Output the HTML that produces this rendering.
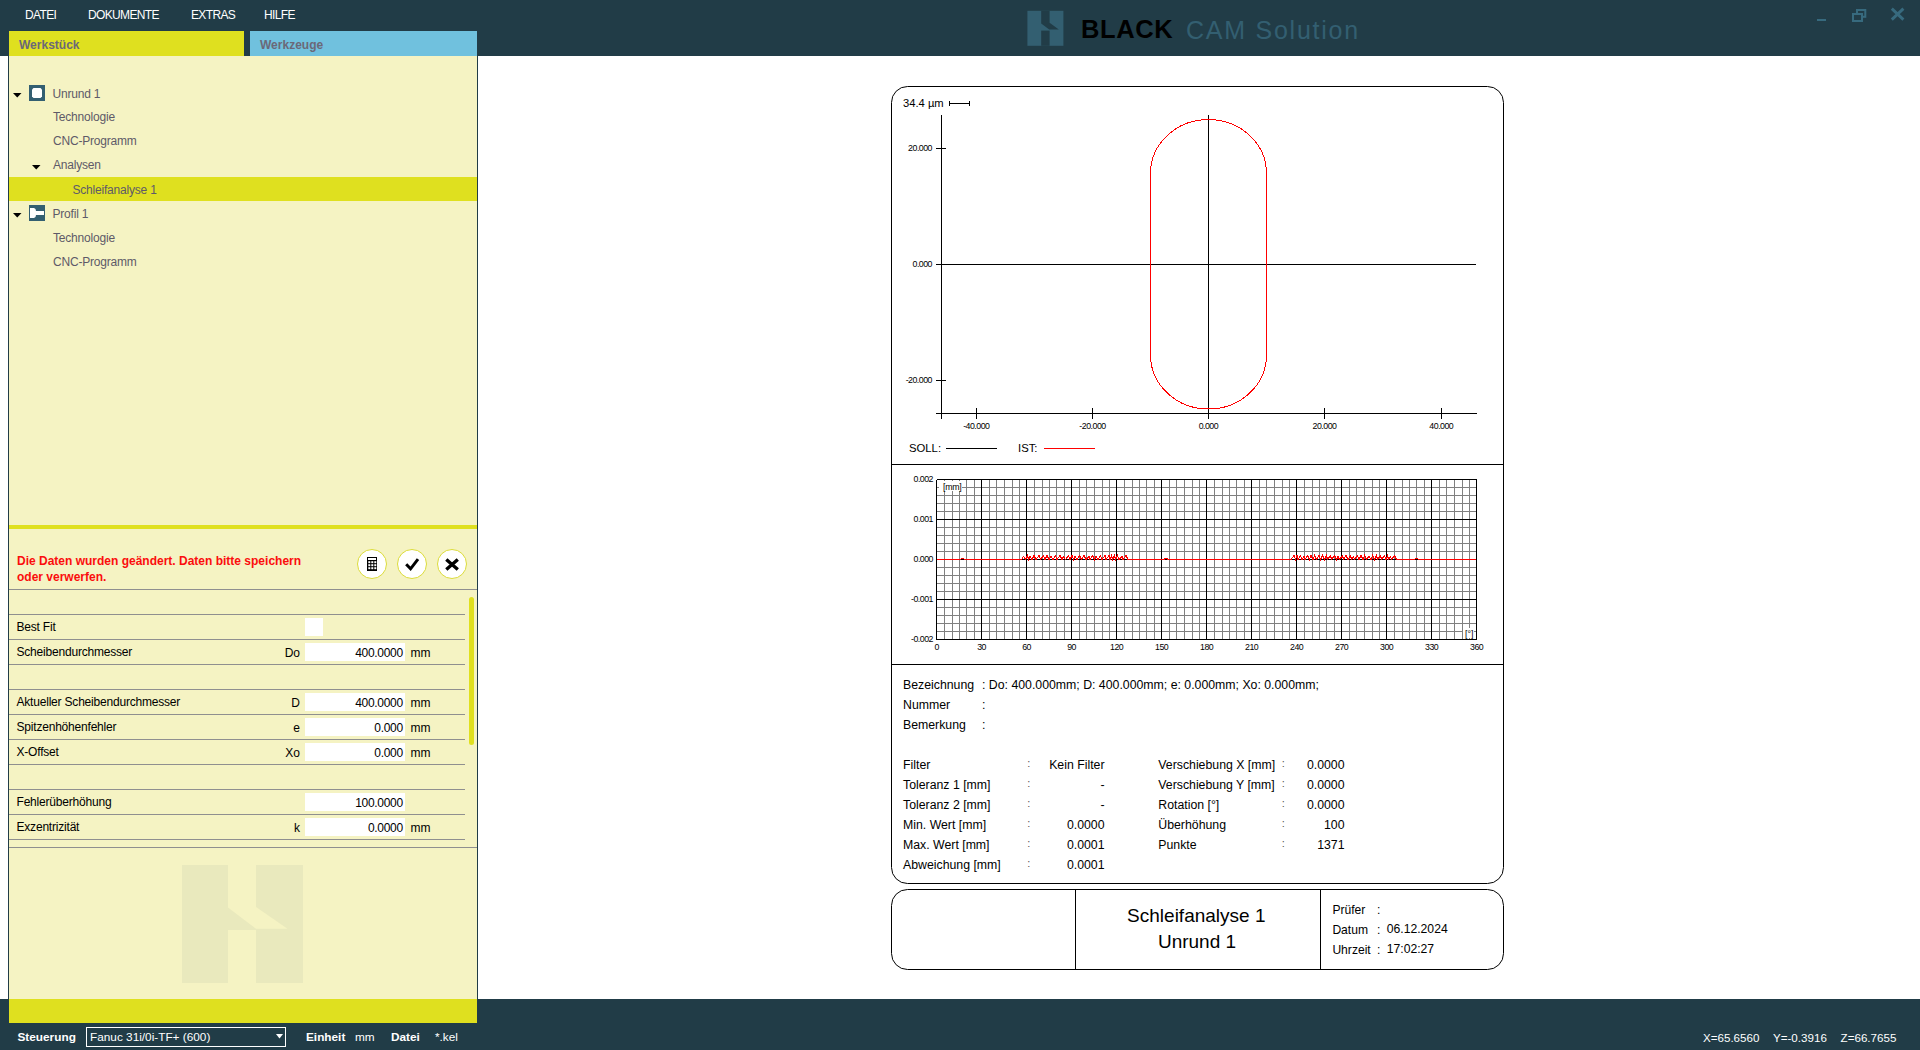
<!DOCTYPE html>
<html><head><meta charset="utf-8"><style>
html,body{margin:0;padding:0;width:1920px;height:1050px;overflow:hidden;background:#fff;font-family:"Liberation Sans", sans-serif;}
</style></head><body>
<div style="position:absolute;left:0px;top:0px;width:1920px;height:56px;background:#213c47;"></div>
<div style="position:absolute;left:25px;top:9.44px;font-size:12px;line-height:12px;color:#fff;font-weight:normal;white-space:nowrap;letter-spacing:-0.65px;">DATEI</div>
<div style="position:absolute;left:88px;top:9.44px;font-size:12px;line-height:12px;color:#fff;font-weight:normal;white-space:nowrap;letter-spacing:-0.65px;">DOKUMENTE</div>
<div style="position:absolute;left:191px;top:9.44px;font-size:12px;line-height:12px;color:#fff;font-weight:normal;white-space:nowrap;letter-spacing:-0.65px;">EXTRAS</div>
<div style="position:absolute;left:264px;top:9.44px;font-size:12px;line-height:12px;color:#fff;font-weight:normal;white-space:nowrap;letter-spacing:-0.65px;">HILFE</div>
<svg style="position:absolute;left:1024px;top:8px" width="44" height="42" viewBox="0 0 44 42">
<rect x="3.4" y="2.8" width="36" height="35" fill="#335f71"/>
<polygon points="17.2,2.8 25.6,2.8 25.6,14.8 34.8,21.6 25.2,21.6 17.2,15.6" fill="#213c47"/>
<rect x="17.2" y="22.6" width="8.4" height="15.2" fill="#213c47"/>
</svg>
<div style="position:absolute;left:1081px;top:17.31px;font-size:25.5px;line-height:25.5px;color:#000;font-weight:bold;white-space:nowrap;letter-spacing:0.6px;">BLACK</div>
<div style="position:absolute;left:1186px;top:17.74px;font-size:25px;line-height:25px;color:#335f71;font-weight:normal;white-space:nowrap;letter-spacing:1.75px;">CAM Solution</div>
<svg style="position:absolute;left:1800px;top:0px" width="120" height="40" viewBox="0 0 120 40">
<rect x="17" y="19" width="9" height="2" fill="#376a7e"/>
<rect x="57" y="10" width="8.3" height="6.8" fill="none" stroke="#376a7e" stroke-width="2"/>
<rect x="53" y="14" width="9" height="7" fill="#213c47" stroke="#376a7e" stroke-width="2"/>
<path d="M91.8,8.6 L103.4,19.6 M103.4,8.6 L91.8,19.6" stroke="#376a7e" stroke-width="2.9"/>
</svg>
<div style="position:absolute;left:8px;top:56px;width:470px;height:943px;background:#f5f3c3;"></div>
<div style="position:absolute;left:8px;top:56px;width:1px;height:943px;background:#213c47;"></div>
<div style="position:absolute;left:477px;top:56px;width:1px;height:943px;background:#213c47;"></div>
<div style="position:absolute;left:8px;top:31px;width:1px;height:25px;background:#213c47;"></div>
<div style="position:absolute;left:9px;top:31px;width:235px;height:25px;background:#dfe01f;"></div>
<div style="position:absolute;left:250px;top:31px;width:227px;height:25px;background:#70c1de;"></div>
<div style="position:absolute;left:19px;top:38.84px;font-size:12px;line-height:12px;color:#6b6878;font-weight:bold;white-space:nowrap;">Werkstück</div>
<div style="position:absolute;left:260px;top:38.84px;font-size:12px;line-height:12px;color:#6b6878;font-weight:bold;white-space:nowrap;">Werkzeuge</div>
<div style="position:absolute;left:9px;top:177px;width:468px;height:24px;background:#dfe01f;"></div>
<svg style="position:absolute;left:13px;top:93px" width="9" height="5" viewBox="0 0 9 5"><polygon points="0,0 8.5,0 4.25,4.6" fill="#000"/></svg>
<svg style="position:absolute;left:32px;top:164.5px" width="9" height="5" viewBox="0 0 9 5"><polygon points="0,0 8.5,0 4.25,4.6" fill="#000"/></svg>
<svg style="position:absolute;left:13px;top:212.5px" width="9" height="5" viewBox="0 0 9 5"><polygon points="0,0 8.5,0 4.25,4.6" fill="#000"/></svg>
<svg style="position:absolute;left:29px;top:85px" width="16" height="16" viewBox="0 0 16 16">
<rect x="0" y="0" width="16" height="16" fill="#335f71"/>
<polygon points="4.5,3 11.5,3 13,4.5 13,11.5 11.5,13 4.5,13 3,11.5 3,4.5" fill="#fff"/></svg>
<svg style="position:absolute;left:29px;top:205px" width="16" height="16" viewBox="0 0 16 16">
<rect x="0" y="0" width="16" height="16" fill="#335f71"/>
<path d="M1,3 L5,3 Q7,3.5 7,6 L15,6 L15,10 L7,10 Q7,12.5 5,13 L1,13 Z" fill="#fff"/></svg>
<div style="position:absolute;left:52.5px;top:87.84px;font-size:12px;line-height:12px;color:#5e5a68;font-weight:normal;white-space:nowrap;letter-spacing:-0.2px;">Unrund 1</div>
<div style="position:absolute;left:53px;top:111.34px;font-size:12px;line-height:12px;color:#5e5a68;font-weight:normal;white-space:nowrap;letter-spacing:-0.2px;">Technologie</div>
<div style="position:absolute;left:53px;top:135.34px;font-size:12px;line-height:12px;color:#5e5a68;font-weight:normal;white-space:nowrap;letter-spacing:-0.2px;">CNC-Programm</div>
<div style="position:absolute;left:53px;top:159.34px;font-size:12px;line-height:12px;color:#5e5a68;font-weight:normal;white-space:nowrap;letter-spacing:-0.2px;">Analysen</div>
<div style="position:absolute;left:72.5px;top:183.84px;font-size:12px;line-height:12px;color:#5e5a68;font-weight:normal;white-space:nowrap;letter-spacing:-0.2px;">Schleifanalyse 1</div>
<div style="position:absolute;left:52.5px;top:207.84px;font-size:12px;line-height:12px;color:#5e5a68;font-weight:normal;white-space:nowrap;letter-spacing:-0.2px;">Profil 1</div>
<div style="position:absolute;left:53px;top:231.84px;font-size:12px;line-height:12px;color:#5e5a68;font-weight:normal;white-space:nowrap;letter-spacing:-0.2px;">Technologie</div>
<div style="position:absolute;left:53px;top:255.84px;font-size:12px;line-height:12px;color:#5e5a68;font-weight:normal;white-space:nowrap;letter-spacing:-0.2px;">CNC-Programm</div>
<div style="position:absolute;left:9px;top:525px;width:468px;height:4px;background:#dfe01f;"></div>
<div style="position:absolute;left:17px;top:554.84px;font-size:12px;line-height:12px;color:#fb0d0d;font-weight:bold;white-space:nowrap;">Die Daten wurden geändert. Daten bitte speichern</div>
<div style="position:absolute;left:17px;top:570.84px;font-size:12px;line-height:12px;color:#fb0d0d;font-weight:bold;white-space:nowrap;">oder verwerfen.</div>
<div style="position:absolute;left:357px;top:549px;width:28px;height:28px;border:1px solid #dcdc3a;border-radius:50%;background:#fff"></div>
<div style="position:absolute;left:397px;top:549px;width:28px;height:28px;border:1px solid #dcdc3a;border-radius:50%;background:#fff"></div>
<div style="position:absolute;left:436.7px;top:549px;width:28px;height:28px;border:1px solid #dcdc3a;border-radius:50%;background:#fff"></div>
<svg style="position:absolute;left:360px;top:550px" width="110" height="28" viewBox="360 550 110 28">
<rect x="367.5" y="557.5" width="9" height="13" fill="none" stroke="#000" stroke-width="1"/>
<rect x="367" y="560" width="10" height="11" fill="#000"/>
<g fill="#fff">
<rect x="368.3" y="561.2" width="2" height="2"/><rect x="371.3" y="561.2" width="2" height="2"/><rect x="374.3" y="561.2" width="2" height="2"/>
<rect x="368.3" y="564.2" width="2" height="2"/><rect x="371.3" y="564.2" width="2" height="2"/><rect x="374.3" y="564.2" width="2" height="2"/>
<rect x="368.3" y="567.2" width="2" height="2"/><rect x="371.3" y="567.2" width="2" height="2"/><rect x="374.3" y="567.2" width="2" height="2"/>
</g>
<path d="M406.2,564.3 L410.6,568.8 L418,559.2" fill="none" stroke="#000" stroke-width="3"/>
<path d="M446.3,559.4 L457.8,569.6 M457.8,559.4 L446.3,569.6" fill="none" stroke="#000" stroke-width="3.3"/>
</svg>
<div style="position:absolute;left:9px;top:589px;width:468px;height:1px;background:#8f8f8f;"></div>
<div style="position:absolute;left:9px;top:614px;width:456px;height:1px;background:#8f8f8f;"></div>
<div style="position:absolute;left:9px;top:639px;width:456px;height:1px;background:#8f8f8f;"></div>
<div style="position:absolute;left:9px;top:664px;width:456px;height:1px;background:#8f8f8f;"></div>
<div style="position:absolute;left:9px;top:689px;width:456px;height:1px;background:#8f8f8f;"></div>
<div style="position:absolute;left:9px;top:714px;width:456px;height:1px;background:#8f8f8f;"></div>
<div style="position:absolute;left:9px;top:739px;width:456px;height:1px;background:#8f8f8f;"></div>
<div style="position:absolute;left:9px;top:764px;width:456px;height:1px;background:#8f8f8f;"></div>
<div style="position:absolute;left:9px;top:789px;width:456px;height:1px;background:#8f8f8f;"></div>
<div style="position:absolute;left:9px;top:814px;width:456px;height:1px;background:#8f8f8f;"></div>
<div style="position:absolute;left:9px;top:839px;width:456px;height:1px;background:#8f8f8f;"></div>
<div style="position:absolute;left:9px;top:847px;width:468px;height:1px;background:#8f8f8f;"></div>
<div style="position:absolute;left:469px;top:597px;width:5px;height:148px;background:#dfe01f;border-radius:3px;"></div>
<div style="position:absolute;left:16.5px;top:620.84px;font-size:12px;line-height:12px;color:#000;font-weight:normal;white-space:nowrap;letter-spacing:-0.2px;">Best Fit</div>
<div style="position:absolute;left:305px;top:618px;width:18px;height:18px;background:#fff;"></div>
<div style="position:absolute;left:16.5px;top:645.84px;font-size:12px;line-height:12px;color:#000;font-weight:normal;white-space:nowrap;letter-spacing:-0.2px;">Scheibendurchmesser</div>
<div style="position:absolute;left:305px;top:643px;width:100px;height:18px;background:#fff;"></div>
<div style="position:absolute;left:300px;top:646.64px;font-size:12px;line-height:12px;color:#000;font-weight:normal;white-space:nowrap;transform:translateX(-100%);">Do</div>
<div style="position:absolute;left:402.8px;top:646.64px;font-size:12px;line-height:12px;color:#000;font-weight:normal;white-space:nowrap;transform:translateX(-100%);letter-spacing:-0.3px;">400.0000</div>
<div style="position:absolute;left:410.5px;top:646.64px;font-size:12px;line-height:12px;color:#000;font-weight:normal;white-space:nowrap;">mm</div>
<div style="position:absolute;left:16.5px;top:695.84px;font-size:12px;line-height:12px;color:#000;font-weight:normal;white-space:nowrap;letter-spacing:-0.2px;">Aktueller Scheibendurchmesser</div>
<div style="position:absolute;left:305px;top:693px;width:100px;height:18px;background:#fff;"></div>
<div style="position:absolute;left:300px;top:696.64px;font-size:12px;line-height:12px;color:#000;font-weight:normal;white-space:nowrap;transform:translateX(-100%);">D</div>
<div style="position:absolute;left:402.8px;top:696.64px;font-size:12px;line-height:12px;color:#000;font-weight:normal;white-space:nowrap;transform:translateX(-100%);letter-spacing:-0.3px;">400.0000</div>
<div style="position:absolute;left:410.5px;top:696.64px;font-size:12px;line-height:12px;color:#000;font-weight:normal;white-space:nowrap;">mm</div>
<div style="position:absolute;left:16.5px;top:720.84px;font-size:12px;line-height:12px;color:#000;font-weight:normal;white-space:nowrap;letter-spacing:-0.2px;">Spitzenhöhenfehler</div>
<div style="position:absolute;left:305px;top:718px;width:100px;height:18px;background:#fff;"></div>
<div style="position:absolute;left:300px;top:721.64px;font-size:12px;line-height:12px;color:#000;font-weight:normal;white-space:nowrap;transform:translateX(-100%);">e</div>
<div style="position:absolute;left:402.8px;top:721.64px;font-size:12px;line-height:12px;color:#000;font-weight:normal;white-space:nowrap;transform:translateX(-100%);letter-spacing:-0.3px;">0.000</div>
<div style="position:absolute;left:410.5px;top:721.64px;font-size:12px;line-height:12px;color:#000;font-weight:normal;white-space:nowrap;">mm</div>
<div style="position:absolute;left:16.5px;top:745.84px;font-size:12px;line-height:12px;color:#000;font-weight:normal;white-space:nowrap;letter-spacing:-0.2px;">X-Offset</div>
<div style="position:absolute;left:305px;top:743px;width:100px;height:18px;background:#fff;"></div>
<div style="position:absolute;left:300px;top:746.64px;font-size:12px;line-height:12px;color:#000;font-weight:normal;white-space:nowrap;transform:translateX(-100%);">Xo</div>
<div style="position:absolute;left:402.8px;top:746.64px;font-size:12px;line-height:12px;color:#000;font-weight:normal;white-space:nowrap;transform:translateX(-100%);letter-spacing:-0.3px;">0.000</div>
<div style="position:absolute;left:410.5px;top:746.64px;font-size:12px;line-height:12px;color:#000;font-weight:normal;white-space:nowrap;">mm</div>
<div style="position:absolute;left:16.5px;top:795.84px;font-size:12px;line-height:12px;color:#000;font-weight:normal;white-space:nowrap;letter-spacing:-0.2px;">Fehlerüberhöhung</div>
<div style="position:absolute;left:305px;top:793px;width:100px;height:18px;background:#fff;"></div>
<div style="position:absolute;left:402.8px;top:796.64px;font-size:12px;line-height:12px;color:#000;font-weight:normal;white-space:nowrap;transform:translateX(-100%);letter-spacing:-0.3px;">100.0000</div>
<div style="position:absolute;left:16.5px;top:820.84px;font-size:12px;line-height:12px;color:#000;font-weight:normal;white-space:nowrap;letter-spacing:-0.2px;">Exzentrizität</div>
<div style="position:absolute;left:305px;top:818px;width:100px;height:18px;background:#fff;"></div>
<div style="position:absolute;left:300px;top:821.64px;font-size:12px;line-height:12px;color:#000;font-weight:normal;white-space:nowrap;transform:translateX(-100%);">k</div>
<div style="position:absolute;left:402.8px;top:821.64px;font-size:12px;line-height:12px;color:#000;font-weight:normal;white-space:nowrap;transform:translateX(-100%);letter-spacing:-0.3px;">0.0000</div>
<div style="position:absolute;left:410.5px;top:821.64px;font-size:12px;line-height:12px;color:#000;font-weight:normal;white-space:nowrap;">mm</div>
<svg style="position:absolute;left:182px;top:865px" width="122" height="119" viewBox="0 0 122 119">
<rect x="0" y="0" width="121" height="118" fill="#e9e9bd"/>
<polygon points="46,0 74,0 74,42 105.5,63.8 74,63.8 46,42.5" fill="#f5f3c3"/>
<rect x="46" y="65" width="28" height="53" fill="#f5f3c3"/>
</svg>
<div style="position:absolute;left:0px;top:999px;width:1920px;height:51px;background:#213c47;"></div>
<div style="position:absolute;left:9px;top:999px;width:468px;height:24px;background:#dfe01f;"></div>
<div style="position:absolute;left:17.5px;top:1032.01px;font-size:11.8px;line-height:11.8px;color:#fff;font-weight:bold;white-space:nowrap;">Steuerung</div>
<div style="position:absolute;left:86px;top:1027px;width:198px;height:18px;border:1px solid #fff"></div>
<div style="position:absolute;left:90px;top:1032.01px;font-size:11.8px;line-height:11.8px;color:#fff;font-weight:normal;white-space:nowrap;">Fanuc 31i/0i-TF+ (600)</div>
<svg style="position:absolute;left:276px;top:1034px" width="8" height="5" viewBox="0 0 8 5"><polygon points="0,0 7,0 3.5,4.5" fill="#fff"/></svg>
<div style="position:absolute;left:306px;top:1032.01px;font-size:11.8px;line-height:11.8px;color:#fff;font-weight:bold;white-space:nowrap;">Einheit</div>
<div style="position:absolute;left:355px;top:1032.01px;font-size:11.8px;line-height:11.8px;color:#fff;font-weight:normal;white-space:nowrap;">mm</div>
<div style="position:absolute;left:391px;top:1032.01px;font-size:11.8px;line-height:11.8px;color:#fff;font-weight:bold;white-space:nowrap;">Datei</div>
<div style="position:absolute;left:435px;top:1032.01px;font-size:11.8px;line-height:11.8px;color:#fff;font-weight:normal;white-space:nowrap;">*.kel</div>
<div style="position:absolute;left:1703px;top:1032.18px;font-size:11.6px;line-height:11.6px;color:#fff;font-weight:normal;white-space:nowrap;">X=65.6560</div>
<div style="position:absolute;left:1773px;top:1032.18px;font-size:11.6px;line-height:11.6px;color:#fff;font-weight:normal;white-space:nowrap;">Y=-0.3916</div>
<div style="position:absolute;left:1840.6px;top:1032.18px;font-size:11.6px;line-height:11.6px;color:#fff;font-weight:normal;white-space:nowrap;">Z=66.7655</div>
<svg style="position:absolute;left:0;top:0" width="1920" height="1050" viewBox="0 0 1920 1050">
<rect x="891.5" y="86.5" width="612" height="797" rx="16" ry="16" fill="#fff" stroke="#000" stroke-width="1"/>
<rect x="891.5" y="889.5" width="612" height="80" rx="16" ry="16" fill="#fff" stroke="#000" stroke-width="1"/>
<g shape-rendering="crispEdges" stroke="#000" stroke-width="1">
<line x1="891" y1="464.5" x2="1504" y2="464.5"/>
<line x1="891" y1="664.5" x2="1504" y2="664.5"/>
<line x1="1075.5" y1="889.5" x2="1075.5" y2="969.5"/>
<line x1="1320.5" y1="889.5" x2="1320.5" y2="969.5"/>
<line x1="941.5" y1="115" x2="941.5" y2="419"/>
<line x1="936" y1="413.5" x2="1477" y2="413.5"/>
<line x1="936" y1="264.5" x2="1476" y2="264.5"/>
<line x1="1208.5" y1="115" x2="1208.5" y2="419"/>
<line x1="936" y1="148.5" x2="946" y2="148.5"/>
<line x1="936" y1="380.5" x2="946" y2="380.5"/>
<line x1="936" y1="264.5" x2="946" y2="264.5"/>
<line x1="976.5" y1="408" x2="976.5" y2="419"/>
<line x1="1092.5" y1="408" x2="1092.5" y2="419"/>
<line x1="1324.5" y1="408" x2="1324.5" y2="419"/>
<line x1="1441.5" y1="408" x2="1441.5" y2="419"/>
<line x1="950" y1="103.5" x2="970" y2="103.5"/><line x1="949.5" y1="101" x2="949.5" y2="106"/><line x1="969.5" y1="101" x2="969.5" y2="106"/>
<line x1="946" y1="448.5" x2="997" y2="448.5"/>
</g>
<line x1="1044" y1="448.5" x2="1095" y2="448.5" stroke="#f00" stroke-width="1" shape-rendering="crispEdges"/>
<path d="M1150.5,173.5 A58,54 0 0 1 1266.5,173.5 L1266.5,355 A58,54 0 0 1 1150.5,355 Z" fill="none" stroke="#f00" stroke-width="1" shape-rendering="crispEdges"/>
<g shape-rendering="crispEdges" stroke-width="1">
<line x1="944.5" y1="479.5" x2="944.5" y2="639.5" stroke="#808080"/>
<line x1="952.5" y1="479.5" x2="952.5" y2="639.5" stroke="#808080"/>
<line x1="959.5" y1="479.5" x2="959.5" y2="639.5" stroke="#808080"/>
<line x1="966.5" y1="479.5" x2="966.5" y2="639.5" stroke="#808080"/>
<line x1="974.5" y1="479.5" x2="974.5" y2="639.5" stroke="#808080"/>
<line x1="989.5" y1="479.5" x2="989.5" y2="639.5" stroke="#808080"/>
<line x1="996.5" y1="479.5" x2="996.5" y2="639.5" stroke="#808080"/>
<line x1="1004.5" y1="479.5" x2="1004.5" y2="639.5" stroke="#808080"/>
<line x1="1012.5" y1="479.5" x2="1012.5" y2="639.5" stroke="#808080"/>
<line x1="1019.5" y1="479.5" x2="1019.5" y2="639.5" stroke="#808080"/>
<line x1="1034.5" y1="479.5" x2="1034.5" y2="639.5" stroke="#808080"/>
<line x1="1042.5" y1="479.5" x2="1042.5" y2="639.5" stroke="#808080"/>
<line x1="1049.5" y1="479.5" x2="1049.5" y2="639.5" stroke="#808080"/>
<line x1="1056.5" y1="479.5" x2="1056.5" y2="639.5" stroke="#808080"/>
<line x1="1064.5" y1="479.5" x2="1064.5" y2="639.5" stroke="#808080"/>
<line x1="1079.5" y1="479.5" x2="1079.5" y2="639.5" stroke="#808080"/>
<line x1="1086.5" y1="479.5" x2="1086.5" y2="639.5" stroke="#808080"/>
<line x1="1094.5" y1="479.5" x2="1094.5" y2="639.5" stroke="#808080"/>
<line x1="1102.5" y1="479.5" x2="1102.5" y2="639.5" stroke="#808080"/>
<line x1="1109.5" y1="479.5" x2="1109.5" y2="639.5" stroke="#808080"/>
<line x1="1124.5" y1="479.5" x2="1124.5" y2="639.5" stroke="#808080"/>
<line x1="1132.5" y1="479.5" x2="1132.5" y2="639.5" stroke="#808080"/>
<line x1="1139.5" y1="479.5" x2="1139.5" y2="639.5" stroke="#808080"/>
<line x1="1146.5" y1="479.5" x2="1146.5" y2="639.5" stroke="#808080"/>
<line x1="1154.5" y1="479.5" x2="1154.5" y2="639.5" stroke="#808080"/>
<line x1="1169.5" y1="479.5" x2="1169.5" y2="639.5" stroke="#808080"/>
<line x1="1176.5" y1="479.5" x2="1176.5" y2="639.5" stroke="#808080"/>
<line x1="1184.5" y1="479.5" x2="1184.5" y2="639.5" stroke="#808080"/>
<line x1="1192.5" y1="479.5" x2="1192.5" y2="639.5" stroke="#808080"/>
<line x1="1199.5" y1="479.5" x2="1199.5" y2="639.5" stroke="#808080"/>
<line x1="1214.5" y1="479.5" x2="1214.5" y2="639.5" stroke="#808080"/>
<line x1="1222.5" y1="479.5" x2="1222.5" y2="639.5" stroke="#808080"/>
<line x1="1229.5" y1="479.5" x2="1229.5" y2="639.5" stroke="#808080"/>
<line x1="1236.5" y1="479.5" x2="1236.5" y2="639.5" stroke="#808080"/>
<line x1="1244.5" y1="479.5" x2="1244.5" y2="639.5" stroke="#808080"/>
<line x1="1259.5" y1="479.5" x2="1259.5" y2="639.5" stroke="#808080"/>
<line x1="1266.5" y1="479.5" x2="1266.5" y2="639.5" stroke="#808080"/>
<line x1="1274.5" y1="479.5" x2="1274.5" y2="639.5" stroke="#808080"/>
<line x1="1282.5" y1="479.5" x2="1282.5" y2="639.5" stroke="#808080"/>
<line x1="1289.5" y1="479.5" x2="1289.5" y2="639.5" stroke="#808080"/>
<line x1="1304.5" y1="479.5" x2="1304.5" y2="639.5" stroke="#808080"/>
<line x1="1312.5" y1="479.5" x2="1312.5" y2="639.5" stroke="#808080"/>
<line x1="1319.5" y1="479.5" x2="1319.5" y2="639.5" stroke="#808080"/>
<line x1="1326.5" y1="479.5" x2="1326.5" y2="639.5" stroke="#808080"/>
<line x1="1334.5" y1="479.5" x2="1334.5" y2="639.5" stroke="#808080"/>
<line x1="1349.5" y1="479.5" x2="1349.5" y2="639.5" stroke="#808080"/>
<line x1="1356.5" y1="479.5" x2="1356.5" y2="639.5" stroke="#808080"/>
<line x1="1364.5" y1="479.5" x2="1364.5" y2="639.5" stroke="#808080"/>
<line x1="1372.5" y1="479.5" x2="1372.5" y2="639.5" stroke="#808080"/>
<line x1="1379.5" y1="479.5" x2="1379.5" y2="639.5" stroke="#808080"/>
<line x1="1394.5" y1="479.5" x2="1394.5" y2="639.5" stroke="#808080"/>
<line x1="1402.5" y1="479.5" x2="1402.5" y2="639.5" stroke="#808080"/>
<line x1="1409.5" y1="479.5" x2="1409.5" y2="639.5" stroke="#808080"/>
<line x1="1416.5" y1="479.5" x2="1416.5" y2="639.5" stroke="#808080"/>
<line x1="1424.5" y1="479.5" x2="1424.5" y2="639.5" stroke="#808080"/>
<line x1="1439.5" y1="479.5" x2="1439.5" y2="639.5" stroke="#808080"/>
<line x1="1446.5" y1="479.5" x2="1446.5" y2="639.5" stroke="#808080"/>
<line x1="1454.5" y1="479.5" x2="1454.5" y2="639.5" stroke="#808080"/>
<line x1="1462.5" y1="479.5" x2="1462.5" y2="639.5" stroke="#808080"/>
<line x1="1469.5" y1="479.5" x2="1469.5" y2="639.5" stroke="#808080"/>
<line x1="936.5" y1="487.5" x2="1476.5" y2="487.5" stroke="#808080"/>
<line x1="936.5" y1="495.5" x2="1476.5" y2="495.5" stroke="#808080"/>
<line x1="936.5" y1="503.5" x2="1476.5" y2="503.5" stroke="#808080"/>
<line x1="936.5" y1="511.5" x2="1476.5" y2="511.5" stroke="#808080"/>
<line x1="936.5" y1="527.5" x2="1476.5" y2="527.5" stroke="#808080"/>
<line x1="936.5" y1="535.5" x2="1476.5" y2="535.5" stroke="#808080"/>
<line x1="936.5" y1="543.5" x2="1476.5" y2="543.5" stroke="#808080"/>
<line x1="936.5" y1="551.5" x2="1476.5" y2="551.5" stroke="#808080"/>
<line x1="936.5" y1="567.5" x2="1476.5" y2="567.5" stroke="#808080"/>
<line x1="936.5" y1="575.5" x2="1476.5" y2="575.5" stroke="#808080"/>
<line x1="936.5" y1="583.5" x2="1476.5" y2="583.5" stroke="#808080"/>
<line x1="936.5" y1="591.5" x2="1476.5" y2="591.5" stroke="#808080"/>
<line x1="936.5" y1="607.5" x2="1476.5" y2="607.5" stroke="#808080"/>
<line x1="936.5" y1="615.5" x2="1476.5" y2="615.5" stroke="#808080"/>
<line x1="936.5" y1="623.5" x2="1476.5" y2="623.5" stroke="#808080"/>
<line x1="936.5" y1="631.5" x2="1476.5" y2="631.5" stroke="#808080"/>
<line x1="936.5" y1="479.5" x2="936.5" y2="639.5" stroke="#000"/>
<line x1="981.5" y1="479.5" x2="981.5" y2="639.5" stroke="#000"/>
<line x1="1026.5" y1="479.5" x2="1026.5" y2="639.5" stroke="#000"/>
<line x1="1071.5" y1="479.5" x2="1071.5" y2="639.5" stroke="#000"/>
<line x1="1116.5" y1="479.5" x2="1116.5" y2="639.5" stroke="#000"/>
<line x1="1161.5" y1="479.5" x2="1161.5" y2="639.5" stroke="#000"/>
<line x1="1206.5" y1="479.5" x2="1206.5" y2="639.5" stroke="#000"/>
<line x1="1251.5" y1="479.5" x2="1251.5" y2="639.5" stroke="#000"/>
<line x1="1296.5" y1="479.5" x2="1296.5" y2="639.5" stroke="#000"/>
<line x1="1341.5" y1="479.5" x2="1341.5" y2="639.5" stroke="#000"/>
<line x1="1386.5" y1="479.5" x2="1386.5" y2="639.5" stroke="#000"/>
<line x1="1431.5" y1="479.5" x2="1431.5" y2="639.5" stroke="#000"/>
<line x1="1476.5" y1="479.5" x2="1476.5" y2="639.5" stroke="#000"/>
<line x1="936.5" y1="479.5" x2="1476.5" y2="479.5" stroke="#000"/>
<line x1="936.5" y1="519.5" x2="1476.5" y2="519.5" stroke="#000"/>
<line x1="936.5" y1="559.5" x2="1476.5" y2="559.5" stroke="#000"/>
<line x1="936.5" y1="599.5" x2="1476.5" y2="599.5" stroke="#000"/>
<line x1="936.5" y1="639.5" x2="1476.5" y2="639.5" stroke="#000"/>
</g>
<rect x="939" y="481" width="23" height="10" fill="#fff"/>
<rect x="1463" y="628" width="11" height="10" fill="#fff"/>
<polyline points="936.5,559.5 939.5,559.5 942.5,559.5 945.5,559.5 948.5,559.5 951.5,559.5 954.5,559.5 957.5,559.5 960.5,559.5 961.5,558.5 963.5,558.5 964.5,559.5 967.5,559.5 970.5,559.5 973.5,559.5 976.5,559.5 979.5,559.5 982.5,559.5 985.5,559.5 988.5,559.5 991.5,559.5 994.5,559.5 997.5,559.5 1000.5,559.5 1003.5,559.5 1006.5,559.5 1009.5,559.5 1012.5,559.5 1015.5,559.5 1018.5,559.5 1021.5,559.5 1023.5,556.5 1025.5,559.5 1027.5,555.5 1028.5,559.5 1030.0,556.5 1032.0,559.5 1034.0,555.5 1036.0,559.5 1039.0,555.5 1040.5,559.5 1043.5,555.5 1045.0,559.5 1047.0,555.5 1049.0,559.5 1051.0,556.5 1053.0,559.5 1055.5,555.5 1057.0,559.5 1060.0,555.5 1062.0,559.5 1063.5,556.5 1065.5,559.5 1068.5,555.5 1070.0,559.5 1072.0,555.5 1073.5,559.5 1075.0,556.5 1077.0,559.5 1079.5,555.5 1081.5,559.5 1084.0,555.5 1086.0,559.5 1089.0,556.5 1090.0,559.5 1092.5,555.5 1094.5,559.5 1096.0,556.5 1098.0,559.5 1100.5,555.5 1102.0,559.5 1105.0,555.5 1106.0,559.5 1109.0,555.5 1110.0,559.5 1111.5,555.5 1112.5,559.5 1114.5,555.5 1115.5,559.5 1117.5,555.5 1119.0,559.5 1122.0,556.5 1123.0,559.5 1126.0,555.5 1128.0,559.5 1131.0,559.5 1134.0,559.5 1137.0,559.5 1140.0,559.5 1143.0,559.5 1146.0,559.5 1149.0,559.5 1152.0,559.5 1155.0,559.5 1158.0,559.5 1161.0,559.5 1164.0,559.5 1165.0,558.5 1167.0,558.5 1168.0,559.5 1171.0,559.5 1174.0,559.5 1177.0,559.5 1180.0,559.5 1183.0,559.5 1186.0,559.5 1189.0,559.5 1192.0,559.5 1195.0,559.5 1198.0,559.5 1201.0,559.5 1204.0,559.5 1207.0,559.5 1210.0,559.5 1213.0,559.5 1216.0,559.5 1219.0,559.5 1222.0,559.5 1225.0,559.5 1228.0,559.5 1231.0,559.5 1234.0,559.5 1237.0,559.5 1240.0,559.5 1243.0,559.5 1246.0,559.5 1249.0,559.5 1252.0,559.5 1255.0,559.5 1258.0,559.5 1261.0,559.5 1264.0,559.5 1267.0,559.5 1270.0,559.5 1273.0,559.5 1276.0,559.5 1279.0,559.5 1282.0,559.5 1285.0,559.5 1288.0,559.5 1291.0,559.5 1294.0,555.5 1295.5,559.5 1297.0,555.5 1298.0,559.5 1300.5,555.5 1302.0,559.5 1304.0,556.5 1305.0,559.5 1307.5,555.5 1309.5,559.5 1311.0,555.5 1313.0,559.5 1314.5,555.5 1316.5,559.5 1319.0,555.5 1320.5,559.5 1322.5,555.5 1324.5,559.5 1326.5,555.5 1327.5,559.5 1330.5,555.5 1331.5,559.5 1334.5,555.5 1336.5,559.5 1338.0,556.5 1339.5,559.5 1342.5,555.5 1343.5,559.5 1346.0,555.5 1348.0,559.5 1350.5,555.5 1351.5,559.5 1353.5,556.5 1354.5,559.5 1357.5,555.5 1359.0,559.5 1361.0,555.5 1363.0,559.5 1364.5,555.5 1366.5,559.5 1369.0,556.5 1371.0,559.5 1372.5,555.5 1374.5,559.5 1376.5,555.5 1377.5,559.5 1380.5,555.5 1381.5,559.5 1384.5,555.5 1386.0,559.5 1387.5,555.5 1388.5,559.5 1390.5,556.5 1391.5,559.5 1394.5,555.5 1396.5,559.5 1399.5,559.5 1402.5,559.5 1405.5,559.5 1408.5,559.5 1411.5,559.5 1414.5,559.5 1415.5,558.5 1417.5,558.5 1418.5,559.5 1421.5,559.5 1424.5,559.5 1427.5,559.5 1430.5,559.5 1433.5,559.5 1436.5,559.5 1439.5,559.5 1442.5,559.5 1445.5,559.5 1448.5,559.5 1451.5,559.5 1454.5,559.5 1457.5,559.5 1460.5,559.5 1463.5,559.5 1466.5,559.5 1469.5,559.5 1472.5,559.5 1475.5,559.5" fill="none" stroke="#f00" stroke-width="1" shape-rendering="crispEdges"/>
</svg>
<div style="position:absolute;left:932px;top:143.75px;font-size:8.8px;line-height:8.8px;color:#000;font-weight:normal;white-space:nowrap;transform:translateX(-100%);letter-spacing:-0.5px;">20.000</div>
<div style="position:absolute;left:932px;top:259.75px;font-size:8.8px;line-height:8.8px;color:#000;font-weight:normal;white-space:nowrap;transform:translateX(-100%);letter-spacing:-0.5px;">0.000</div>
<div style="position:absolute;left:932px;top:375.85px;font-size:8.8px;line-height:8.8px;color:#000;font-weight:normal;white-space:nowrap;transform:translateX(-100%);letter-spacing:-0.5px;">-20.000</div>
<div style="position:absolute;left:976.3px;top:421.55px;font-size:8.8px;line-height:8.8px;color:#000;font-weight:normal;white-space:nowrap;transform:translateX(-50%);letter-spacing:-0.5px;">-40.000</div>
<div style="position:absolute;left:1092.5px;top:421.55px;font-size:8.8px;line-height:8.8px;color:#000;font-weight:normal;white-space:nowrap;transform:translateX(-50%);letter-spacing:-0.5px;">-20.000</div>
<div style="position:absolute;left:1208.4px;top:421.55px;font-size:8.8px;line-height:8.8px;color:#000;font-weight:normal;white-space:nowrap;transform:translateX(-50%);letter-spacing:-0.5px;">0.000</div>
<div style="position:absolute;left:1324.5px;top:421.55px;font-size:8.8px;line-height:8.8px;color:#000;font-weight:normal;white-space:nowrap;transform:translateX(-50%);letter-spacing:-0.5px;">20.000</div>
<div style="position:absolute;left:1441.3px;top:421.55px;font-size:8.8px;line-height:8.8px;color:#000;font-weight:normal;white-space:nowrap;transform:translateX(-50%);letter-spacing:-0.5px;">40.000</div>
<div style="position:absolute;left:903px;top:97.52px;font-size:11.2px;line-height:11.2px;color:#000;font-weight:normal;white-space:nowrap;">34.4 µm</div>
<div style="position:absolute;left:909px;top:443.43px;font-size:11.3px;line-height:11.3px;color:#000;font-weight:normal;white-space:nowrap;">SOLL:</div>
<div style="position:absolute;left:1018px;top:443.43px;font-size:11.3px;line-height:11.3px;color:#000;font-weight:normal;white-space:nowrap;">IST:</div>
<div style="position:absolute;left:933px;top:474.95px;font-size:8.8px;line-height:8.8px;color:#000;font-weight:normal;white-space:nowrap;transform:translateX(-100%);letter-spacing:-0.5px;">0.002</div>
<div style="position:absolute;left:933px;top:514.95px;font-size:8.8px;line-height:8.8px;color:#000;font-weight:normal;white-space:nowrap;transform:translateX(-100%);letter-spacing:-0.5px;">0.001</div>
<div style="position:absolute;left:933px;top:554.95px;font-size:8.8px;line-height:8.8px;color:#000;font-weight:normal;white-space:nowrap;transform:translateX(-100%);letter-spacing:-0.5px;">0.000</div>
<div style="position:absolute;left:933px;top:594.95px;font-size:8.8px;line-height:8.8px;color:#000;font-weight:normal;white-space:nowrap;transform:translateX(-100%);letter-spacing:-0.5px;">-0.001</div>
<div style="position:absolute;left:933px;top:634.95px;font-size:8.8px;line-height:8.8px;color:#000;font-weight:normal;white-space:nowrap;transform:translateX(-100%);letter-spacing:-0.5px;">-0.002</div>
<div style="position:absolute;left:936.6px;top:642.55px;font-size:8.8px;line-height:8.8px;color:#000;font-weight:normal;white-space:nowrap;transform:translateX(-50%);letter-spacing:-0.5px;">0</div>
<div style="position:absolute;left:981.6px;top:642.55px;font-size:8.8px;line-height:8.8px;color:#000;font-weight:normal;white-space:nowrap;transform:translateX(-50%);letter-spacing:-0.5px;">30</div>
<div style="position:absolute;left:1026.6px;top:642.55px;font-size:8.8px;line-height:8.8px;color:#000;font-weight:normal;white-space:nowrap;transform:translateX(-50%);letter-spacing:-0.5px;">60</div>
<div style="position:absolute;left:1071.6px;top:642.55px;font-size:8.8px;line-height:8.8px;color:#000;font-weight:normal;white-space:nowrap;transform:translateX(-50%);letter-spacing:-0.5px;">90</div>
<div style="position:absolute;left:1116.6px;top:642.55px;font-size:8.8px;line-height:8.8px;color:#000;font-weight:normal;white-space:nowrap;transform:translateX(-50%);letter-spacing:-0.5px;">120</div>
<div style="position:absolute;left:1161.6px;top:642.55px;font-size:8.8px;line-height:8.8px;color:#000;font-weight:normal;white-space:nowrap;transform:translateX(-50%);letter-spacing:-0.5px;">150</div>
<div style="position:absolute;left:1206.6px;top:642.55px;font-size:8.8px;line-height:8.8px;color:#000;font-weight:normal;white-space:nowrap;transform:translateX(-50%);letter-spacing:-0.5px;">180</div>
<div style="position:absolute;left:1251.6px;top:642.55px;font-size:8.8px;line-height:8.8px;color:#000;font-weight:normal;white-space:nowrap;transform:translateX(-50%);letter-spacing:-0.5px;">210</div>
<div style="position:absolute;left:1296.6px;top:642.55px;font-size:8.8px;line-height:8.8px;color:#000;font-weight:normal;white-space:nowrap;transform:translateX(-50%);letter-spacing:-0.5px;">240</div>
<div style="position:absolute;left:1341.6px;top:642.55px;font-size:8.8px;line-height:8.8px;color:#000;font-weight:normal;white-space:nowrap;transform:translateX(-50%);letter-spacing:-0.5px;">270</div>
<div style="position:absolute;left:1386.6px;top:642.55px;font-size:8.8px;line-height:8.8px;color:#000;font-weight:normal;white-space:nowrap;transform:translateX(-50%);letter-spacing:-0.5px;">300</div>
<div style="position:absolute;left:1431.6px;top:642.55px;font-size:8.8px;line-height:8.8px;color:#000;font-weight:normal;white-space:nowrap;transform:translateX(-50%);letter-spacing:-0.5px;">330</div>
<div style="position:absolute;left:1476.6px;top:642.55px;font-size:8.8px;line-height:8.8px;color:#000;font-weight:normal;white-space:nowrap;transform:translateX(-50%);letter-spacing:-0.5px;">360</div>
<div style="position:absolute;left:943px;top:482.55px;font-size:8.8px;line-height:8.8px;color:#000;font-weight:normal;white-space:nowrap;letter-spacing:-0.3px;">[mm]</div>
<div style="position:absolute;left:1465px;top:629.55px;font-size:8.8px;line-height:8.8px;color:#000;font-weight:normal;white-space:nowrap;">[°]</div>
<div style="position:absolute;left:903px;top:678.59px;font-size:12.3px;line-height:12.3px;color:#000;font-weight:normal;white-space:nowrap;">Bezeichnung</div>
<div style="position:absolute;left:982px;top:678.59px;font-size:12.3px;line-height:12.3px;color:#000;font-weight:normal;white-space:nowrap;">: Do: 400.000mm; D: 400.000mm; e: 0.000mm; Xo: 0.000mm;</div>
<div style="position:absolute;left:903px;top:698.59px;font-size:12.3px;line-height:12.3px;color:#000;font-weight:normal;white-space:nowrap;">Nummer</div>
<div style="position:absolute;left:982px;top:698.59px;font-size:12.3px;line-height:12.3px;color:#000;font-weight:normal;white-space:nowrap;">:</div>
<div style="position:absolute;left:903px;top:718.59px;font-size:12.3px;line-height:12.3px;color:#000;font-weight:normal;white-space:nowrap;">Bemerkung</div>
<div style="position:absolute;left:982px;top:718.59px;font-size:12.3px;line-height:12.3px;color:#000;font-weight:normal;white-space:nowrap;">:</div>
<div style="position:absolute;left:903px;top:758.59px;font-size:12.3px;line-height:12.3px;color:#000;font-weight:normal;white-space:nowrap;">Filter</div>
<div style="position:absolute;left:1027.3px;top:758.19px;font-size:11px;line-height:11px;color:#555;font-weight:normal;white-space:nowrap;">:</div>
<div style="position:absolute;left:1104.5px;top:758.59px;font-size:12.3px;line-height:12.3px;color:#000;font-weight:normal;white-space:nowrap;transform:translateX(-100%);">Kein Filter</div>
<div style="position:absolute;left:903px;top:778.59px;font-size:12.3px;line-height:12.3px;color:#000;font-weight:normal;white-space:nowrap;">Toleranz 1 [mm]</div>
<div style="position:absolute;left:1027.3px;top:778.19px;font-size:11px;line-height:11px;color:#555;font-weight:normal;white-space:nowrap;">:</div>
<div style="position:absolute;left:1104.5px;top:778.59px;font-size:12.3px;line-height:12.3px;color:#000;font-weight:normal;white-space:nowrap;transform:translateX(-100%);">-</div>
<div style="position:absolute;left:903px;top:798.59px;font-size:12.3px;line-height:12.3px;color:#000;font-weight:normal;white-space:nowrap;">Toleranz 2 [mm]</div>
<div style="position:absolute;left:1027.3px;top:798.19px;font-size:11px;line-height:11px;color:#555;font-weight:normal;white-space:nowrap;">:</div>
<div style="position:absolute;left:1104.5px;top:798.59px;font-size:12.3px;line-height:12.3px;color:#000;font-weight:normal;white-space:nowrap;transform:translateX(-100%);">-</div>
<div style="position:absolute;left:903px;top:818.59px;font-size:12.3px;line-height:12.3px;color:#000;font-weight:normal;white-space:nowrap;">Min. Wert [mm]</div>
<div style="position:absolute;left:1027.3px;top:818.19px;font-size:11px;line-height:11px;color:#555;font-weight:normal;white-space:nowrap;">:</div>
<div style="position:absolute;left:1104.5px;top:818.59px;font-size:12.3px;line-height:12.3px;color:#000;font-weight:normal;white-space:nowrap;transform:translateX(-100%);">0.0000</div>
<div style="position:absolute;left:903px;top:838.59px;font-size:12.3px;line-height:12.3px;color:#000;font-weight:normal;white-space:nowrap;">Max. Wert [mm]</div>
<div style="position:absolute;left:1027.3px;top:838.19px;font-size:11px;line-height:11px;color:#555;font-weight:normal;white-space:nowrap;">:</div>
<div style="position:absolute;left:1104.5px;top:838.59px;font-size:12.3px;line-height:12.3px;color:#000;font-weight:normal;white-space:nowrap;transform:translateX(-100%);">0.0001</div>
<div style="position:absolute;left:903px;top:858.59px;font-size:12.3px;line-height:12.3px;color:#000;font-weight:normal;white-space:nowrap;">Abweichung [mm]</div>
<div style="position:absolute;left:1027.3px;top:858.19px;font-size:11px;line-height:11px;color:#555;font-weight:normal;white-space:nowrap;">:</div>
<div style="position:absolute;left:1104.5px;top:858.59px;font-size:12.3px;line-height:12.3px;color:#000;font-weight:normal;white-space:nowrap;transform:translateX(-100%);">0.0001</div>
<div style="position:absolute;left:1158.3px;top:758.59px;font-size:12.3px;line-height:12.3px;color:#000;font-weight:normal;white-space:nowrap;">Verschiebung X [mm]</div>
<div style="position:absolute;left:1281.8px;top:758.19px;font-size:11px;line-height:11px;color:#555;font-weight:normal;white-space:nowrap;">:</div>
<div style="position:absolute;left:1344.5px;top:758.59px;font-size:12.3px;line-height:12.3px;color:#000;font-weight:normal;white-space:nowrap;transform:translateX(-100%);">0.0000</div>
<div style="position:absolute;left:1158.3px;top:778.59px;font-size:12.3px;line-height:12.3px;color:#000;font-weight:normal;white-space:nowrap;">Verschiebung Y [mm]</div>
<div style="position:absolute;left:1281.8px;top:778.19px;font-size:11px;line-height:11px;color:#555;font-weight:normal;white-space:nowrap;">:</div>
<div style="position:absolute;left:1344.5px;top:778.59px;font-size:12.3px;line-height:12.3px;color:#000;font-weight:normal;white-space:nowrap;transform:translateX(-100%);">0.0000</div>
<div style="position:absolute;left:1158.3px;top:798.59px;font-size:12.3px;line-height:12.3px;color:#000;font-weight:normal;white-space:nowrap;">Rotation [°]</div>
<div style="position:absolute;left:1281.8px;top:798.19px;font-size:11px;line-height:11px;color:#555;font-weight:normal;white-space:nowrap;">:</div>
<div style="position:absolute;left:1344.5px;top:798.59px;font-size:12.3px;line-height:12.3px;color:#000;font-weight:normal;white-space:nowrap;transform:translateX(-100%);">0.0000</div>
<div style="position:absolute;left:1158.3px;top:818.59px;font-size:12.3px;line-height:12.3px;color:#000;font-weight:normal;white-space:nowrap;">Überhöhung</div>
<div style="position:absolute;left:1281.8px;top:818.19px;font-size:11px;line-height:11px;color:#555;font-weight:normal;white-space:nowrap;">:</div>
<div style="position:absolute;left:1344.5px;top:818.59px;font-size:12.3px;line-height:12.3px;color:#000;font-weight:normal;white-space:nowrap;transform:translateX(-100%);">100</div>
<div style="position:absolute;left:1158.3px;top:838.59px;font-size:12.3px;line-height:12.3px;color:#000;font-weight:normal;white-space:nowrap;">Punkte</div>
<div style="position:absolute;left:1281.8px;top:838.19px;font-size:11px;line-height:11px;color:#555;font-weight:normal;white-space:nowrap;">:</div>
<div style="position:absolute;left:1344.5px;top:838.59px;font-size:12.3px;line-height:12.3px;color:#000;font-weight:normal;white-space:nowrap;transform:translateX(-100%);">1371</div>
<div style="position:absolute;left:1196.3px;top:905.62px;font-size:19px;line-height:19px;color:#000;font-weight:normal;white-space:nowrap;transform:translateX(-50%);">Schleifanalyse 1</div>
<div style="position:absolute;left:1197px;top:931.62px;font-size:19px;line-height:19px;color:#000;font-weight:normal;white-space:nowrap;transform:translateX(-50%);">Unrund 1</div>
<div style="position:absolute;left:1332.4px;top:903.56px;font-size:12.1px;line-height:12.1px;color:#000;font-weight:normal;white-space:nowrap;">Prüfer</div>
<div style="position:absolute;left:1377px;top:903.56px;font-size:12.1px;line-height:12.1px;color:#000;font-weight:normal;white-space:nowrap;">:</div>
<div style="position:absolute;left:1386.7px;top:903.47px;font-size:12.2px;line-height:12.2px;color:#000;font-weight:normal;white-space:nowrap;"></div>
<div style="position:absolute;left:1332.4px;top:923.56px;font-size:12.1px;line-height:12.1px;color:#000;font-weight:normal;white-space:nowrap;">Datum</div>
<div style="position:absolute;left:1377px;top:923.56px;font-size:12.1px;line-height:12.1px;color:#000;font-weight:normal;white-space:nowrap;">:</div>
<div style="position:absolute;left:1386.7px;top:923.47px;font-size:12.2px;line-height:12.2px;color:#000;font-weight:normal;white-space:nowrap;">06.12.2024</div>
<div style="position:absolute;left:1332.4px;top:943.56px;font-size:12.1px;line-height:12.1px;color:#000;font-weight:normal;white-space:nowrap;">Uhrzeit</div>
<div style="position:absolute;left:1377px;top:943.56px;font-size:12.1px;line-height:12.1px;color:#000;font-weight:normal;white-space:nowrap;">:</div>
<div style="position:absolute;left:1386.7px;top:943.47px;font-size:12.2px;line-height:12.2px;color:#000;font-weight:normal;white-space:nowrap;">17:02:27</div>
</body></html>
